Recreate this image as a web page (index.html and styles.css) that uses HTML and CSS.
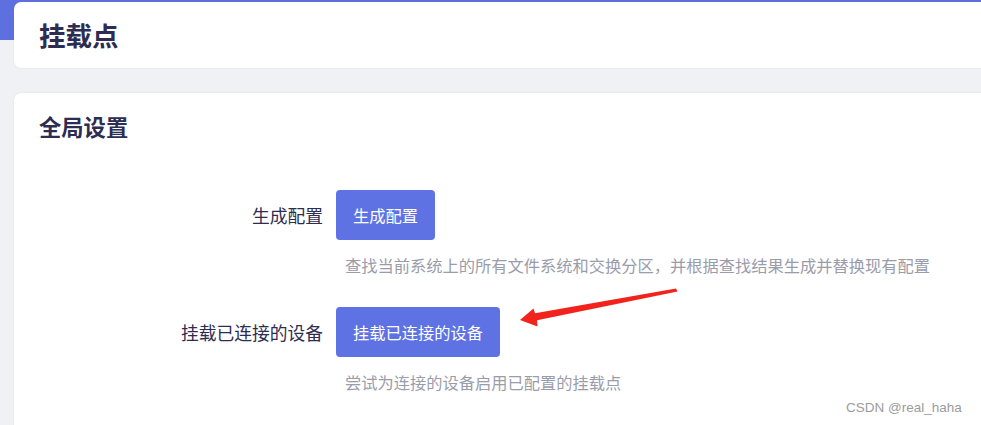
FILE: index.html
```html
<!DOCTYPE html>
<html lang="zh">
<head>
<meta charset="utf-8">
<link rel="stylesheet" href="styles.css">
</head>
<body>
<div class="page">
  <section class="card card-head">
    <h1 class="page-title">挂载点</h1>
  </section>
  <section class="card card-main">
    <h2 class="section-title">全局设置</h2>
    <div class="form">
      <div class="row">
        <div class="label">生成配置</div>
        <div class="field">
          <button class="btn">生成配置</button>
          <div class="desc">查找当前系统上的所有文件系统和交换分区，并根据查找结果生成并替换现有配置</div>
        </div>
      </div>
      <div class="row">
        <div class="label">挂载已连接的设备</div>
        <div class="field">
          <button class="btn">挂载已连接的设备</button>
          <div class="desc">尝试为连接的设备启用已配置的挂载点</div>
        </div>
      </div>
    </div>
  </section>
</div>
<svg class="arrow" width="981" height="425" viewBox="0 0 981 425" aria-hidden="true">
  <polygon points="520,320 533.5,308.5 535,313.3 676,288.5 677.5,291.5 537,320.2 537.5,326.5" fill="#f2231c"/>
</svg>
<div class="watermark">CSDN @real_haha</div>
</body>
</html>
```
FILE: styles.css
```css
html, body {
  margin: 0;
  padding: 0;
  width: 981px;
  height: 425px;
  overflow: hidden;
}
body {
  background: linear-gradient(#5e6fe0 0, #5e6fe0 40px, #f0f1f5 40px);
  font-family: "Noto Sans CJK SC", "Noto Sans", sans-serif;
  color: #32325d;
  position: relative;
}
.page {
  box-sizing: border-box;
  height: 425px;
  padding: 2px 0 0 14px;
  margin-right: -30px;
  display: flex;
  flex-direction: column;
  gap: 25px;
}
.card {
  background: #fff;
  border-radius: 7px;
  box-shadow: 0 0 2px rgba(50, 50, 93, 0.10);
}
.card-head {
  height: 66px;
  flex: none;
  display: flex;
  align-items: center;
  padding-left: 25px;
}
.page-title {
  margin: 0;
  font-size: 26.5px;
  font-weight: 700;
  line-height: 1;
  color: #2d2c52;
  padding-top: 1px;
}
.card-main {
  flex: 1;
  min-height: 0;
  overflow: hidden;
  border-bottom-left-radius: 0;
  border-bottom-right-radius: 0;
  padding: 18px 0 0 25px;
}
.section-title {
  margin: 0;
  font-size: 22.3px;
  font-weight: 700;
  line-height: 30px;
  color: #2d2c52;
}
.form {
  margin-top: 49px;
  display: flex;
  flex-direction: column;
  gap: 32px;
}
.row {
  display: flex;
  gap: 13px;
}
.label {
  width: 284px;
  text-align: right;
  font-size: 17.75px;
  line-height: 50px;
  height: 50px;
  color: #2d2c52;
}
.field {
  display: flex;
  flex-direction: column;
  align-items: flex-start;
}
.btn {
  height: 50px;
  padding: 0 17px;
  border: none;
  border-radius: 4px;
  background: #5e72e4;
  color: #fff;
  font-family: "Noto Sans CJK SC", "Noto Sans", sans-serif;
  font-size: 16.25px;
  cursor: pointer;
}
.desc {
  margin-top: 15px;
  padding-left: 9px;
  font-size: 16.25px;
  line-height: 20px;
  color: #9a9cab;
  white-space: nowrap;
}
.arrow {
  position: absolute;
  left: 0;
  top: 0;
  pointer-events: none;
}
.watermark {
  position: absolute;
  left: 846px;
  top: 400px;
  font-family: "Liberation Sans", Arial, sans-serif;
  font-size: 13.5px;
  color: #9c9c9c;
}
```
